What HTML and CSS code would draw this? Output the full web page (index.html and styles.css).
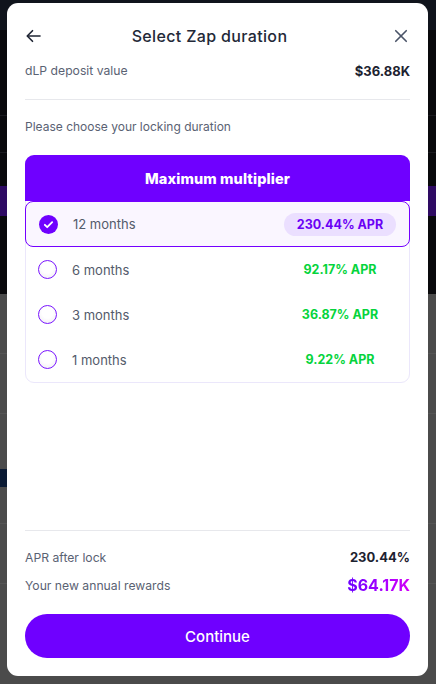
FILE: index.html
```html
<!DOCTYPE html>
<html lang="en">
<head>
    <meta charset="UTF-8">
    <meta name="viewport" content="width=device-width, initial-scale=1.0">
    <title>Select Zap duration</title>
    <link rel="stylesheet" href="styles.css">
</head>
<body>
    <div class="page">
        <div class="page-top">
            <div class="page-nav"></div>
            <div class="page-line"></div>
            <div class="page-stat"><span class="page-bar"></span><span class="page-bar"></span></div>
        </div>
        <div class="page-bottom">
            <div class="page-row"></div>
            <div class="page-row"></div>
            <div class="page-row tall"><span class="page-tag"></span></div>
            <div class="page-row"></div>
        </div>
    </div>

    <div class="modal">
        <div class="modal-header">
            <button class="icon-btn" aria-label="Back">
                <svg width="18" height="18" viewBox="0 0 24 24" fill="none" stroke="#1e2433" stroke-width="2.2" stroke-linecap="round" stroke-linejoin="round">
                    <path d="M20 12H4"/>
                    <path d="M10 5l-7 7 7 7"/>
                </svg>
            </button>
            <h2>Select Zap duration</h2>
            <button class="icon-btn" aria-label="Close">
                <svg width="18" height="18" viewBox="0 0 24 24" fill="none" stroke="#4a5468" stroke-width="2.2" stroke-linecap="round">
                    <path d="M5 5l14 14"/>
                    <path d="M19 5L5 19"/>
                </svg>
            </button>
        </div>

        <div class="info-row deposit">
            <span class="label">dLP deposit value</span>
            <span class="value">$36.88K</span>
        </div>

        <p class="hint">Please choose your locking duration</p>

        <div class="duration-card">
            <div class="card-head">Maximum multiplier</div>
            <div class="option selected">
                <span class="check">
                    <svg width="11" height="11" viewBox="0 0 12 12" fill="none" stroke="#fff" stroke-width="2" stroke-linecap="round" stroke-linejoin="round">
                        <path d="M2 6.3l2.6 2.6L10 3.4"/>
                    </svg>
                </span>
                <span class="months">12 months</span>
                <span class="apr pill">230.44% APR</span>
            </div>
            <div class="option">
                <span class="radio"></span>
                <span class="months">6 months</span>
                <span class="apr">92.17% APR</span>
            </div>
            <div class="option">
                <span class="radio"></span>
                <span class="months">3 months</span>
                <span class="apr">36.87% APR</span>
            </div>
            <div class="option">
                <span class="radio"></span>
                <span class="months">1 months</span>
                <span class="apr">9.22% APR</span>
            </div>
        </div>

        <div class="summary">
            <div class="info-row">
                <span class="label">APR after lock</span>
                <span class="value">230.44%</span>
            </div>
            <div class="info-row">
                <span class="label">Your new annual rewards</span>
                <span class="value rewards">$64.17K</span>
            </div>
            <button class="continue-btn">Continue</button>
        </div>
    </div>
</body>
</html>
```

FILE: styles.css
```css
* {
    box-sizing: border-box;
}
body {
    margin: 0;
    font-family: Inter, "Noto Sans", sans-serif;
    background: #4b4b4b;
    height: 684px;
    overflow: hidden;
}
button {
    font-family: inherit;
}

/* page behind the overlay */
.page {
    overflow: hidden;
}
.page-top {
    height: 294px;
    background: #09090c;
}
.page-nav {
    height: 30px;
    background: #10141c;
}
.page-line {
    margin-top: 85px;
    height: 38px;
    border-top: 1px solid #1a1a1f;
    border-bottom: 1px solid #1a1a1f;
}
.page-stat {
    display: flex;
    justify-content: space-between;
    margin-top: 33px;
}
.page-bar {
    width: 8px;
    height: 30px;
    background: #2e0a63;
}
.page-bottom {
    height: 390px;
}
.page-row {
    height: 60px;
    border-bottom: 1px solid #555;
}
.page-row.tall {
    height: 110px;
    padding-top: 55px;
}
.page-tag {
    display: block;
    width: 7px;
    height: 18px;
    background: #0a1a33;
}

/* modal */
.modal {
    position: fixed;
    top: 3px;
    left: 7px;
    width: 421px;
    height: 673px;
    background: #fff;
    border-radius: 11px;
    padding: 17px 18px 18px;
    display: flex;
    flex-direction: column;
}
.modal-header {
    display: flex;
    align-items: center;
    justify-content: space-between;
    height: 32px;
}
.modal-header h2 {
    margin: 0 16px 0 0;
    font-size: 16px;
    font-weight: 500;
    letter-spacing: 0.35px;
    color: #232938;
}
.icon-btn {
    background: none;
    border: none;
    padding: 0;
    width: 18px;
    height: 18px;
    cursor: pointer;
}
.info-row {
    display: flex;
    justify-content: space-between;
    align-items: center;
    height: 20px;
}
.info-row .label {
    font-size: 12.2px;
    color: #5a6273;
}
.info-row .value {
    font-size: 13px;
    font-weight: 700;
    color: #1d2230;
}
.deposit {
    margin-top: 9px;
    padding-bottom: 18px;
    height: 39px;
    align-items: flex-start;
    border-bottom: 1px solid #e7e8ec;
}
.deposit span {
    line-height: 20px;
}
.hint {
    margin: 17px 0 0;
    font-size: 12px;
    line-height: 20px;
    color: #5a6273;
}

/* duration card */
.duration-card {
    margin-top: 18px;
    border: 1px solid #ebe7fb;
    border-radius: 9px;
}
.card-head {
    margin: -1px -1px 0;
    height: 46px;
    background: #6f00ff;
    border-radius: 9px 9px 0 0;
    color: #fff;
    font-size: 14.5px;
    font-weight: 800;
    letter-spacing: 0.1px;
    display: flex;
    align-items: center;
    justify-content: center;
}
.option {
    display: flex;
    align-items: center;
    height: 45px;
    padding: 0 13px 0 12px;
}
.option.selected {
    margin: 0 -1px;
    height: 46px;
    padding: 0 13px 0 13px;
    background: #faf6ff;
    border: 1px solid #7400ff;
    border-radius: 8px;
}
.check, .radio {
    width: 19px;
    height: 19px;
    border-radius: 50%;
    flex-shrink: 0;
}
.check {
    background: #6f00ff;
    display: flex;
    align-items: center;
    justify-content: center;
}
.radio {
    border: 1.5px solid #7a16ff;
    background: radial-gradient(circle at 50% 40%, #fff 40%, #eceaef 100%);
}
.months {
    margin-left: 15px;
    flex: 1;
    font-size: 13px;
    color: #535b6b;
}
.apr {
    width: 112px;
    text-align: center;
    font-size: 12.5px;
    font-weight: 700;
    color: #05d43c;
}
.apr.pill {
    height: 23px;
    line-height: 23px;
    border-radius: 12px;
    background: #ebdfff;
    color: #6a00f5;
}

/* summary */
.summary {
    margin-top: auto;
    border-top: 1px solid #e7e8ec;
    padding-top: 16px;
    display: flex;
    flex-direction: column;
    gap: 8px;
}
.value.rewards {
    font-size: 16px;
    background: linear-gradient(90deg, #6a00ff 0%, #b600ff 70%, #d100f5 100%);
    -webkit-background-clip: text;
    background-clip: text;
    color: transparent;
}
.continue-btn {
    margin-top: 11px;
    height: 44px;
    border: none;
    border-radius: 22px;
    background: #6f00ff;
    color: #fff;
    font-size: 15px;
    font-weight: 500;
    cursor: pointer;
}
```
